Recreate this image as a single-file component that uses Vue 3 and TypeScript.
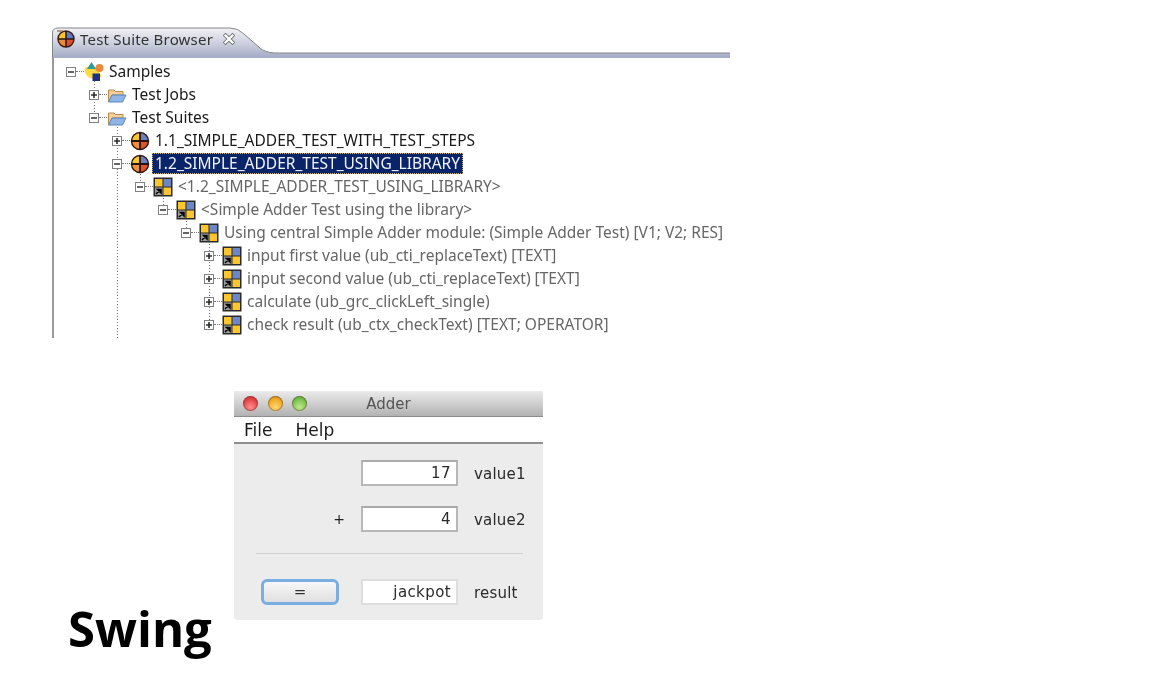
<script setup lang="ts">
type Kind = 'samples' | 'folder' | 'globe' | 'block'
interface Row { depth: number; open: boolean; kind: Kind; label: string; muted?: boolean; selected?: boolean }
const rows: Row[] = [
  { depth: 0, open: true, kind: 'samples', label: 'Samples' },
  { depth: 1, open: false, kind: 'folder', label: 'Test Jobs' },
  { depth: 1, open: true, kind: 'folder', label: 'Test Suites' },
  { depth: 2, open: false, kind: 'globe', label: '1.1_SIMPLE_ADDER_TEST_WITH_TEST_STEPS' },
  { depth: 2, open: true, kind: 'globe', label: '1.2_SIMPLE_ADDER_TEST_USING_LIBRARY', selected: true },
  { depth: 3, open: true, kind: 'block', label: '<1.2_SIMPLE_ADDER_TEST_USING_LIBRARY>', muted: true },
  { depth: 4, open: true, kind: 'block', label: '<Simple Adder Test using the library>', muted: true },
  { depth: 5, open: true, kind: 'block', label: 'Using central Simple Adder module: (Simple Adder Test) [V1; V2; RES]', muted: true },
  { depth: 6, open: false, kind: 'block', label: 'input first value (ub_cti_replaceText) [TEXT]', muted: true },
  { depth: 6, open: false, kind: 'block', label: 'input second value (ub_cti_replaceText) [TEXT]', muted: true },
  { depth: 6, open: false, kind: 'block', label: 'calculate (ub_grc_clickLeft_single)', muted: true },
  { depth: 6, open: false, kind: 'block', label: 'check result (ub_ctx_checkText) [TEXT; OPERATOR]', muted: true },
]
const guides = [
  { x: 40.5, y1: 23, y2: 60 },
  { x: 63.5, y1: 66, y2: 281 },
  { x: 86.5, y1: 113, y2: 129 },
  { x: 109.5, y1: 137, y2: 152 },
  { x: 132.5, y1: 160, y2: 175 },
  { x: 155.5, y1: 183, y2: 268 },
]
</script>

<template>
  <div class="slide">
    <section class="browser">
      <header class="tabstrip">
        <svg class="tabshape" width="678" height="31" viewBox="0 0 678 31">
          <defs>
            <linearGradient id="tabfill" x1="0" y1="0" x2="0" y2="1">
              <stop offset="0" stop-color="#f2f2f5" />
              <stop offset="0.55" stop-color="#c9cddc" />
              <stop offset="1" stop-color="#a3aac4" />
            </linearGradient>
          </defs>
          <path d="M0 31V6Q0 1 6 1H178Q186 1 192 7L208 21Q212 25 222 26H678V31Z" fill="url(#tabfill)" />
          <path d="M.5 31V6Q.5 1 6 1H178Q186 1 192 7L208 21Q212 25 222 26H678" fill="none" stroke="#85868c" />
        </svg>
        <svg class="tabicon" width="18" height="18" viewBox="0 0 18 18">
          <path d="M9 9V1A8 8 0 0 0 1 9Z" fill="#f6c52c" /><path d="M9 9V1A8 8 0 0 1 17 9Z" fill="#5f78c0" />
          <path d="M9 9H1A8 8 0 0 0 9 17Z" fill="#ee8a32" /><path d="M9 9H17A8 8 0 0 1 9 17Z" fill="#d9502c" />
          <circle cx="9" cy="9" r="8" fill="none" stroke="#3a1c14" stroke-width="1.4" />
          <path d="M9 1V17M1 9H17" stroke="#2a1410" stroke-width="1.5" />
          <path d="M0 1H6" stroke="#8b5a3a" stroke-width="1.2" />
        </svg>
        <span class="tabtitle">Test Suite Browser</span>
        <svg class="tabclose" width="12" height="12" viewBox="0 0 12 12">
          <path d="M2.5 2.5L9.5 9.5M9.5 2.5L2.5 9.5" stroke="#777" stroke-width="4" stroke-linecap="square" />
          <path d="M2.5 2.5L9.5 9.5M9.5 2.5L2.5 9.5" stroke="#fff" stroke-width="2.2" stroke-linecap="square" />
        </svg>
      </header>
      <div class="tree">
        <svg class="guides" width="676" height="281" viewBox="0 0 676 281">
          <line v-for="g in guides" :key="g.x" :x1="g.x" :x2="g.x" :y1="g.y1" :y2="g.y2" stroke="#777" stroke-dasharray="1 2" />
        </svg>
        <div v-for="r in rows" :key="r.label" class="row" :style="{ paddingLeft: 12 + r.depth * 23 + 'px' }">
          <span class="toggle" :class="{ plus: !r.open }"></span>
          <span class="dash"></span>
          <svg v-if="r.kind === 'samples'" class="icon" width="20" height="20" viewBox="0 0 20 20">
            <path d="M0.500 8Q0.500 5 3 5H15V11Q18 12 17 15Q15 17.500 10 17Q1 15.500 0.500 8Z" fill="#fbd940" />
            <path d="M7.500 0L12 7H3Z" fill="#2f9b98" />
            <circle cx="15.500" cy="6" r="4" fill="#ea8b3e" />
            <rect x="8.500" y="11.500" width="7.500" height="7.500" fill="#1f2f84" />
          </svg>
          <svg v-else-if="r.kind === 'folder'" class="icon" width="20" height="20" viewBox="0 0 20 20">
            <path d="M1.500 17V5H7L8.500 6.500H16V10H5Z" fill="#f2cf96" stroke="#b98c4e" />
            <path d="M1.500 17L5 10H19L15.500 17Z" fill="#8fb5e6" stroke="#5f86bd" />
          </svg>
          <svg v-else-if="r.kind === 'globe'" class="icon" width="20" height="20" viewBox="0 0 20 20">
            <path d="M10 10V1.500A8.500 8.500 0 0 0 1.500 10Z" fill="#f8c92f" /><path d="M10 10V1.500A8.500 8.500 0 0 1 18.500 10Z" fill="#6a80c4" />
            <path d="M10 10H1.500A8.500 8.500 0 0 0 10 18.500Z" fill="#f0913a" /><path d="M10 10H18.500A8.500 8.500 0 0 1 10 18.500Z" fill="#dc5530" />
            <circle cx="10" cy="10" r="8.500" fill="none" stroke="#3a1c14" stroke-width="1.500" />
            <path d="M10 1.500V18.500M1.500 10H18.500" stroke="#2a1410" stroke-width="1.800" />
          </svg>
          <svg v-else class="icon" width="20" height="20" viewBox="0 0 20 20">
            <rect x="0.500" y="0.500" width="19" height="19" fill="#2a2a2a" />
            <rect x="2" y="2" width="7.500" height="7.500" fill="#fbc62e" />
            <rect x="10.500" y="2" width="7.500" height="7.500" fill="#6d86c6" />
            <rect x="2" y="10.500" width="7.500" height="7.500" fill="#9a9a9a" />
            <rect x="10.500" y="10.500" width="7.500" height="7.500" fill="#fbc62e" />
            <path d="M3 17L7 13M4.500 12.500H8V16Z" stroke="#000" stroke-width="1.500" />
          </svg>
          <span class="label" :class="{ muted: r.muted, selected: r.selected }">{{ r.label }}</span>
        </div>
      </div>
    </section>

    <div class="lower">
      <h1 class="swing">Swing</h1>
      <section class="adder">
        <header class="titlebar">
          <span class="light red"></span><span class="light amber"></span><span class="light green"></span>
          <span class="wintitle">Adder</span>
        </header>
        <nav class="menubar"><span>File</span><span>Help</span></nav>
        <div class="form">
          <div class="formrow">
            <span class="lead"></span>
            <span class="field">17</span>
            <span class="name">value1</span>
          </div>
          <div class="formrow second">
            <span class="lead plus-sign">+</span>
            <span class="field">4</span>
            <span class="name">value2</span>
          </div>
          <hr class="sep" />
          <div class="formrow">
            <button class="equals" type="button">=</button>
            <span class="field light-field">jackpot</span>
            <span class="name">result</span>
          </div>
        </div>
      </section>
    </div>
  </div>
</template>

<style>
html, body { background: #fff; }
</style>

<style scoped>
.slide {
  width: 1166px;
  height: 690px;
  overflow: hidden;
  background: #fff;
  padding: 27px 0 0 52px;
  box-sizing: border-box;
}
.browser {
  width: 678px;
  height: 311px;
  overflow: hidden;
  font-family: "Noto Sans", sans-serif;
  filter: blur(0.35px);
}
.tabstrip {
  position: relative;
  height: 31px;
  display: flex;
  align-items: center;
  padding: 0 0 6px 5px;
  box-sizing: border-box;
  border-bottom: 1px solid #55565c;
}
.tabshape { position: absolute; left: 0; top: 0; }
.tabicon, .tabtitle, .tabclose { position: relative; }
.tabtitle { margin-left: 5px; font-size: 15px; color: #333; letter-spacing: 0.2px; white-space: nowrap; }
.tabclose { margin-left: 10px; }
.tree {
  position: relative;
  height: 280px;
  border-left: 2px solid #9a9a9a;
  box-sizing: border-box;
  padding-top: 2px;
}
.guides { position: absolute; left: 0; top: 0; }
.row {
  position: relative;
  height: 23px;
  display: flex;
  align-items: center;
  white-space: nowrap;
}
.toggle {
  position: relative;
  width: 10px;
  height: 10px;
  flex: none;
  box-sizing: border-box;
  border: 1px solid #808080;
  background: #fff;
}
.toggle::before {
  content: "";
  position: absolute;
  left: 1px; right: 1px; top: 3px;
  height: 2px;
  background: #333;
  transform: scaleY(.75);
}
.toggle.plus::after {
  content: "";
  position: absolute;
  top: 1px; bottom: 1px; left: 3px;
  width: 2px;
  background: #222;
  transform: scaleX(.75);
}
.dash { width: 8px; flex: none; border-top: 1px dotted #777; }
.icon { flex: none; position: relative; }
.label {
  margin: 0 0 0 2px;
  padding: 0 2px 1px;
  font-size: 15.5px;
  line-height: 18px;
  color: #1a1a1a;
  border: 1px solid transparent;
}
.label.muted { color: #666; }
.label.selected {
  background: #0a246a;
  color: #f2f4fa;
  border: 1px dotted #c9b98a;
}

.lower {
  display: flex;
  align-items: flex-start;
  margin: 53px 0 0 16px;
}
.swing {
  margin: 207px 0 0;
  width: 166px;
  flex: none;
  font: 700 49px/60px "Open Sans", sans-serif;
  color: #000;
}
.adder {
  width: 309px;
  height: 229px;
  flex: none;
  background: #ececec;
  border-radius: 0 0 4px 4px;
  font-family: "DejaVu Sans", sans-serif;
  color: #222;
  overflow: hidden;
  filter: blur(0.4px);
}
.titlebar {
  position: relative;
  height: 26px;
  display: flex;
  align-items: center;
  gap: 9.5px;
  padding-left: 9px;
  box-sizing: border-box;
  background: linear-gradient(#ebebeb, #b2b2b2);
  border-bottom: 1px solid #8d8d8d;
}
.light { width: 15px; height: 15px; border-radius: 50%; flex: none; box-shadow: inset 0 0 0 1px rgba(90,60,50,.45); }
.red { background: radial-gradient(circle at 50% 75%, #ff8f8f, #e23a3f 65%, #b03a40); }
.amber { background: radial-gradient(circle at 50% 75%, #ffd870, #eca51f 65%, #b07f2a); }
.green { background: radial-gradient(circle at 50% 75%, #bdec8c, #74bb48 65%, #5f9a48); }
.wintitle {
  position: absolute;
  left: 0; right: 0;
  text-align: center;
  font-size: 15px;
  color: #555;
}
.menubar {
  height: 27px;
  display: flex;
  gap: 23px;
  align-items: center;
  padding-left: 10px;
  background: #fff;
  font-size: 17px;
  color: #1c1c1c;
  border-bottom: 2px solid #8f8f8f;
  box-sizing: border-box;
}
.form { padding: 16px 20px 0 22px; }
.formrow { display: flex; align-items: center; padding-left: 5px; }
.formrow.second { margin-top: 20px; }
.lead { width: 78px; margin-right: 22px; text-align: right; flex: none; height: 26px; line-height: 26px; }
.plus-sign { font-size: 14px; position: relative; left: 6px; }
.field {
  width: 97px;
  height: 26px;
  flex: none;
  box-sizing: border-box;
  background: #fff;
  border: 2px solid #b7b7b7;
  border-top-color: #aaa;
  padding-right: 5px;
  text-align: right;
  font-size: 15px;
  letter-spacing: 0.4px;
  line-height: 23px;
  color: #2a2a2a;
}
.light-field { border-color: #dedede; }
.name { margin-left: 16px; font-size: 15px; letter-spacing: 0.2px; color: #2a2a2a; padding-top: 1px; }
.sep { margin: 21px 0 25px; border: 0; border-top: 1px solid #d0d0d0; }
.equals {
  width: 78px;
  height: 26px;
  flex: none;
  margin-right: 22px;
  padding: 0;
  border: 3px solid #7aaee2;
  border-radius: 6px;
  background: linear-gradient(#f7f7f7, #e0e0e0);
  font: 15px "DejaVu Sans", sans-serif;
  color: #333;
}
</style>
